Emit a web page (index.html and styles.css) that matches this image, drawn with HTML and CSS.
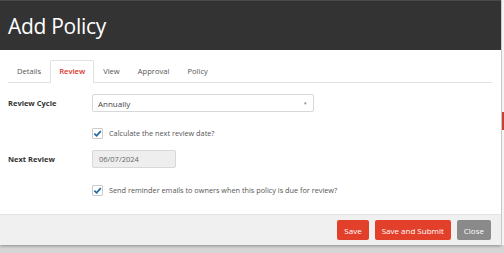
FILE: index.html
```html
<!DOCTYPE html>
<html lang="en">
<head>
    <meta charset="UTF-8">
    <title>Add Policy</title>
    <link rel="stylesheet" href="styles.css">
</head>
<body>
    <div class="page">
        <div class="modal">
            <header class="modal-header">
                <h1>Add Policy</h1>
            </header>
            <div class="modal-body">
                <ul class="tabs">
                    <li>Details</li>
                    <li class="active">Review</li>
                    <li>View</li>
                    <li>Approval</li>
                    <li>Policy</li>
                </ul>

                <div class="form-row">
                    <label class="field-label">Review Cycle</label>
                    <div class="select">
                        <span>Annually</span>
                        <span class="caret">&#9662;</span>
                    </div>
                </div>

                <div class="check-row">
                    <span class="checkbox"><svg viewBox="0 0 10 10"><path d="M1.5 5.2 L4 7.6 L8.6 2.4" /></svg></span>
                    <span>Calculate the next review date?</span>
                </div>

                <div class="form-row">
                    <label class="field-label">Next Review</label>
                    <div class="date-input">06/07/2024</div>
                </div>

                <div class="check-row second">
                    <span class="checkbox"><svg viewBox="0 0 10 10"><path d="M1.5 5.2 L4 7.6 L8.6 2.4" /></svg></span>
                    <span>Send reminder emails to owners when this policy is due for review?</span>
                </div>
            </div>
            <footer class="modal-footer">
                <button class="btn btn-red">Save</button>
                <button class="btn btn-red">Save and Submit</button>
                <button class="btn btn-grey">Close</button>
            </footer>
        </div>
        <div class="backdrop-edge">
            <span class="edge-red"></span>
        </div>
    </div>
</body>
</html>
```

FILE: styles.css
```css
body {
    margin: 0;
    font-family: 'Open Sans', sans-serif;
    background-color: #d6d6d6;
    color: #333;
}
.page {
    display: flex;
    height: 253px;
    overflow: hidden;
}
.modal {
    width: 501px;
    height: 245px;
    background-color: #fff;
    box-shadow: 0 1px 3px rgba(0, 0, 0, 0.35);
    display: flex;
    flex-direction: column;
    flex-shrink: 0;
}
.backdrop-edge {
    flex: 1;
    background-color: #f4f4f4;
    border-left: 1px solid #c8c8c8;
    height: 245px;
    padding-top: 112px;
    box-sizing: border-box;
}
.edge-red {
    display: block;
    height: 18px;
    background-color: #c9402f;
}
.modal-header {
    background-color: #333;
    height: 50px;
    display: flex;
    align-items: center;
    padding: 0 8px;
    border-top: 1px solid #4a4a4a;
    box-sizing: border-box;
}
.modal-header h1 {
    margin: 0;
    color: #fff;
    font-size: 21px;
    font-weight: 400;
    letter-spacing: -0.3px;
}
.modal-body {
    flex: 1;
    padding: 10px 8px 0 8px;
}
.tabs {
    list-style: none;
    margin: 0 1px 11px 0;
    padding: 0;
    display: flex;
    border-bottom: 1px solid #e2e2e2;
}
.tabs li {
    font-size: 7.6px;
    color: #555;
    padding: 0 8px;
    height: 23px;
    line-height: 21px;
    box-sizing: border-box;
    border: 1px solid transparent;
    border-bottom: none;
    margin-bottom: -1px;
}
.tabs li.active {
    color: #d9342b;
    font-weight: 600;
    background-color: #fff;
    border-color: #e2e2e2;
    border-radius: 2px 2px 0 0;
}
.form-row {
    display: flex;
    align-items: center;
}
.field-label {
    width: 84px;
    font-size: 7.5px;
    font-weight: 700;
    color: #333;
}
.select {
    width: 222px;
    height: 18px;
    border: 1px solid #d8d8d8;
    border-radius: 2px;
    display: flex;
    align-items: center;
    justify-content: space-between;
    padding: 0 6px 0 5px;
    box-sizing: border-box;
    font-size: 8px;
    color: #444;
}
.caret {
    font-size: 5px;
    color: #888;
}
.check-row {
    display: flex;
    align-items: center;
    margin: 16px 0 11px 84px;
    font-size: 7.3px;
    line-height: 11px;
    color: #555;
}
.check-row.second {
    margin-top: 17px;
}
.checkbox {
    width: 9px;
    height: 9px;
    border: 1px solid #ccc;
    border-radius: 1px;
    margin-right: 6px;
    display: flex;
}
.checkbox svg {
    width: 9px;
    height: 9px;
    fill: none;
    stroke: #1e6aa8;
    stroke-width: 1.9;
}
.date-input {
    width: 84px;
    height: 18px;
    background-color: #eee;
    border: 1px solid #d8d8d8;
    border-radius: 2px;
    box-sizing: border-box;
    padding-left: 6px;
    font-size: 7.5px;
    line-height: 16px;
    color: #666;
}
.modal-footer {
    height: 30px;
    background-color: #f0f0f0;
    border-top: 1px solid #e4e4e4;
    display: flex;
    justify-content: flex-end;
    align-items: center;
    gap: 6px;
    padding: 0 10px;
}
.btn {
    font-family: 'Open Sans', sans-serif;
    font-size: 8px;
    color: #fff;
    border: none;
    border-radius: 2px;
    height: 20px;
    padding: 0 7px;
    cursor: pointer;
}
.btn-red {
    background-color: #e3402b;
}
.btn-grey {
    background-color: #8a8a8a;
}
```
